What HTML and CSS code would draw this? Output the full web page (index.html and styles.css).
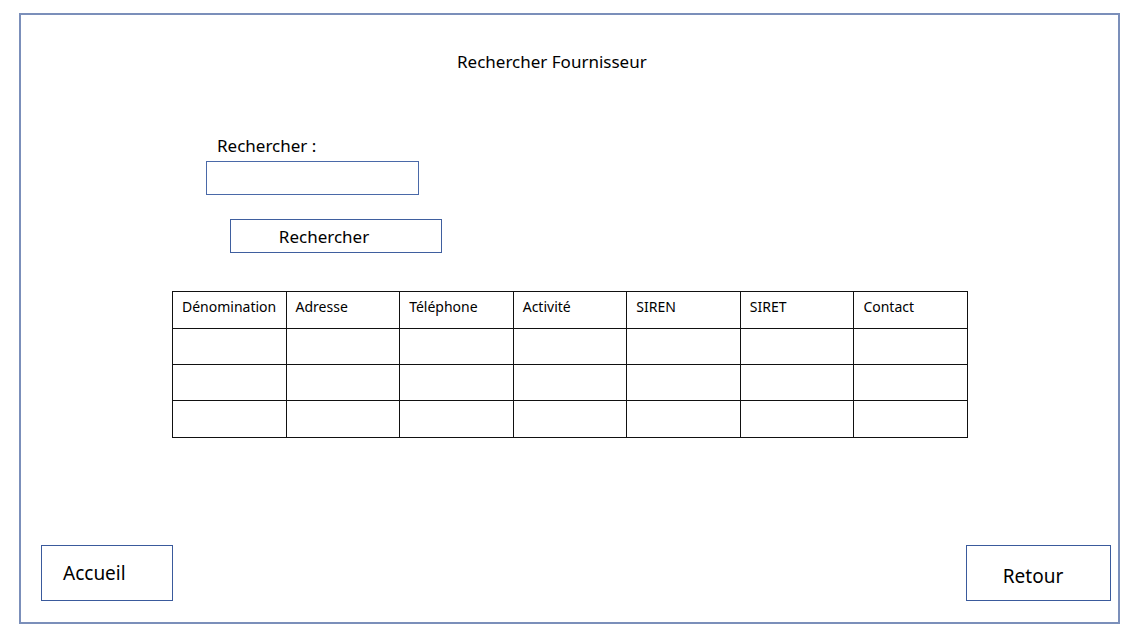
FILE: index.html
```html
<!DOCTYPE html>
<html lang="fr">

<head>
    <meta charset="UTF-8">
    <meta name="viewport" content="width=device-width, initial-scale=1.0">
    <title>Rechercher Fournisseur</title>
    <link rel="stylesheet" href="styles.css">
</head>

<body>
    <div class="frame">
        <h1 class="page-title">Rechercher Fournisseur</h1>

        <!-- Search form -->
        <div class="search-block">
            <label for="searchInput" class="search-label">Rechercher :</label>
            <input type="text" id="searchInput" class="search-input">
            <button type="button" class="search-button">Rechercher</button>
        </div>

        <table class="results">
            <thead>
                <tr>
                    <th>Dénomination</th>
                    <th>Adresse</th>
                    <th>Téléphone</th>
                    <th>Activité</th>
                    <th>SIREN</th>
                    <th>SIRET</th>
                    <th>Contact</th>
                </tr>
            </thead>
            <tbody>
                <tr><td></td><td></td><td></td><td></td><td></td><td></td><td></td></tr>
                <tr><td></td><td></td><td></td><td></td><td></td><td></td><td></td></tr>
                <tr><td></td><td></td><td></td><td></td><td></td><td></td><td></td></tr>
            </tbody>
        </table>

        <div class="footer">
            <button type="button" class="nav-button home-button">Accueil</button>
            <button type="button" class="nav-button back-button">Retour</button>
        </div>
    </div>
</body>

</html>
```

FILE: styles.css
```css
body {
    font-family: "Noto Sans", "Open Sans", sans-serif;
    background-color: #fff;
    color: #000;
    margin: 0;
    padding: 13px 0 0 19px;
}

.frame {
    width: 1101px;
    height: 611px;
    box-sizing: border-box;
    border: 2px solid #7b8fba;
    display: flex;
    flex-direction: column;
}

.page-title {
    margin: 37px 0 0 436px;
    font-size: 17px;
    font-weight: normal;
    line-height: 20px;
}

.search-block {
    display: flex;
    flex-direction: column;
    align-items: flex-start;
    margin-top: 63px;
}

.search-label {
    margin-left: 196px;
    font-size: 17px;
    line-height: 22px;
}

.search-input {
    margin: 4px 0 0 185px;
    width: 213px;
    height: 34px;
    box-sizing: border-box;
    border: 1px solid #4a69a8;
    border-radius: 0;
    padding: 0 6px;
    font-family: inherit;
}

.search-button {
    margin: 24px 0 0 209px;
    width: 212px;
    height: 34px;
    box-sizing: border-box;
    background-color: #fff;
    border: 1px solid #3f5f9f;
    font-family: inherit;
    font-size: 17px;
    color: #000;
    padding: 0 24px 0 0;
}

.results {
    margin: 38px 0 0 151px;
    width: 796px;
    border-collapse: collapse;
    table-layout: fixed;
}

.results th,
.results td {
    border: 1px solid #111;
    height: 35px;
    padding: 0 0 0 9px;
    text-align: left;
    vertical-align: top;
}

.results th {
    font-size: 14px;
    font-weight: normal;
    padding-top: 5px;
    height: 31px;
}

.results tbody tr:last-child td {
    height: 36px;
}

.footer {
    margin-top: auto;
    margin-bottom: 21px;
    display: flex;
    justify-content: space-between;
    padding: 0 7px 0 20px;
}

.nav-button {
    height: 56px;
    box-sizing: border-box;
    background-color: #fff;
    border: 1px solid #3a5a9c;
    font-family: inherit;
    font-size: 19px;
    color: #000;
    cursor: pointer;
}

.home-button {
    width: 132px;
    text-align: left;
    padding: 0 0 1px 21px;
}

.back-button {
    width: 145px;
    padding: 6px 11px 0 0;
}
```
